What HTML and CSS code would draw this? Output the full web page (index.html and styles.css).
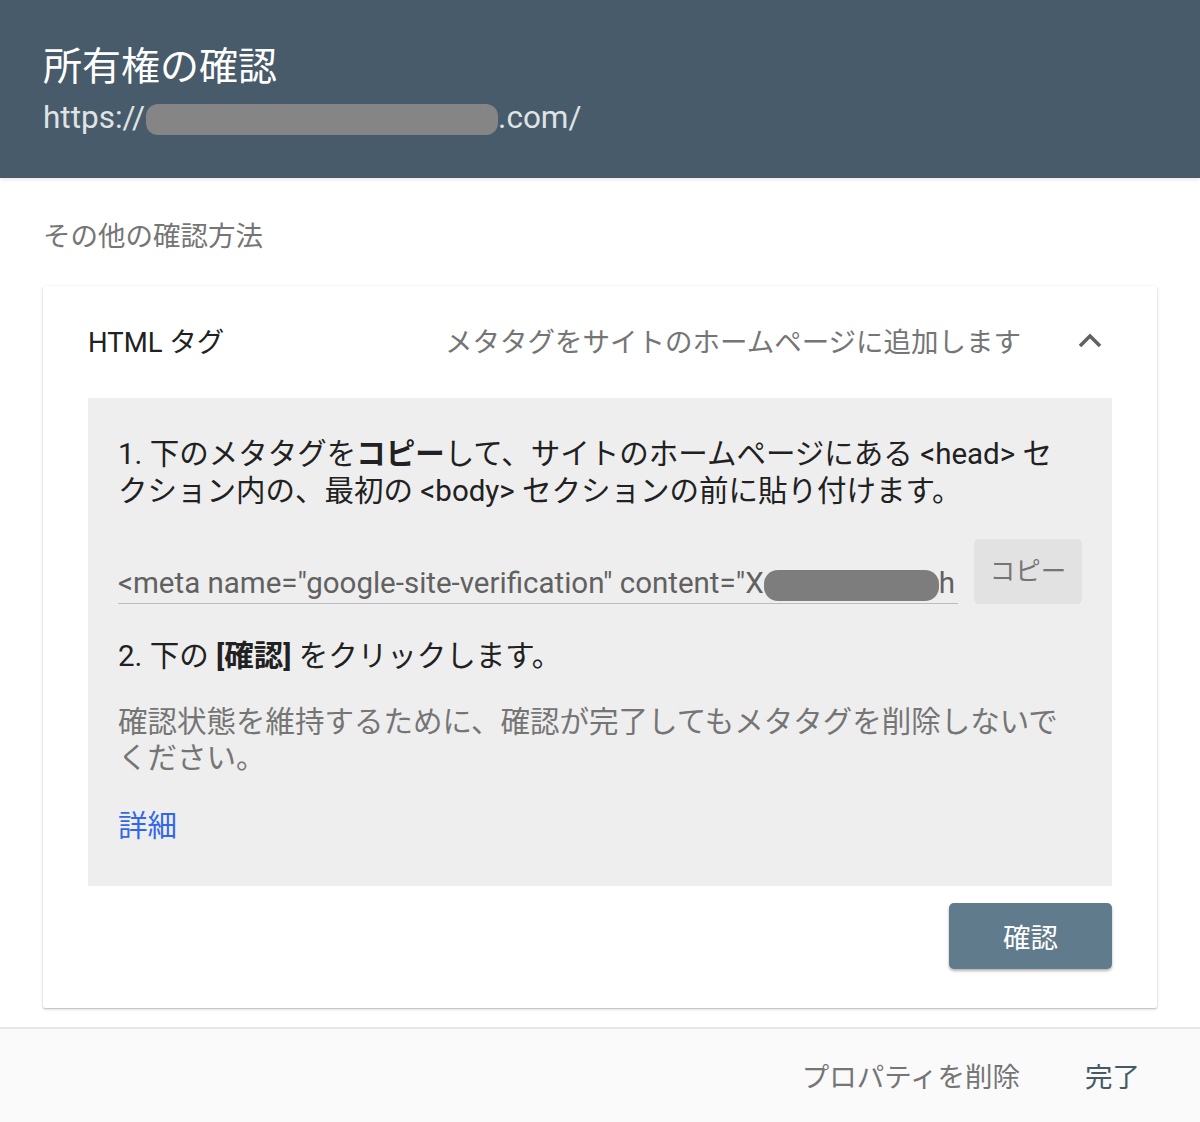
FILE: index.html
```html
<!doctype html>
<html lang="ja">
<head>
  <meta charset="utf-8">
  <title>所有権の確認</title>
  <link rel="stylesheet" href="styles.css">
</head>
<body>
  <div class="page">
    <header class="top">
      <h1 class="top-title">所有権の確認</h1>
      <div class="top-url">https://<span class="redact url-redact"></span>.com/</div>
    </header>

    <main class="content">
      <h2 class="other">その他の確認方法</h2>

      <section class="card">
        <div class="card-head">
          <div class="method">HTML タグ</div>
          <div class="method-desc">メタタグをサイトのホームページに追加します</div>
          <div class="chevron">
            <svg width="26" height="16" viewBox="0 0 26 16">
              <polyline points="3,13 13,3 23,13" fill="none" stroke="#616161" stroke-width="3.5"/>
            </svg>
          </div>
        </div>

        <div class="panel">
          <p class="step step1">1. 下のメタタグを<b>コピー</b>して、サイトのホームページにある &lt;head&gt; セクション内の、最初の &lt;body&gt; セクションの前に貼り付けます。</p>

          <div class="copy-row">
            <div class="field">&lt;meta name="google-site-verification" content="X<span class="redact meta-redact"></span>h</div>
            <button class="copy-btn" type="button">コピー</button>
          </div>

          <p class="step step2">2. 下の <b>[確認]</b> をクリックします。</p>

          <p class="note">確認状態を維持するために、確認が完了してもメタタグを削除しないでください。</p>

          <a class="more" href="#">詳細</a>
        </div>

        <div class="actions">
          <button class="verify-btn" type="button">確認</button>
        </div>
      </section>
    </main>

    <footer class="bottom">
      <button class="text-btn" type="button">プロパティを削除</button>
      <button class="text-btn done" type="button">完了</button>
    </footer>
  </div>
</body>
</html>
```

FILE: styles.css
```css
body {
  margin: 0;
  background: #ffffff;
  font-family: Roboto, "Noto Sans CJK JP", sans-serif;
  color: #212121;
}

.page {
  width: 1200px;
  height: 1122px;
  display: flex;
  flex-direction: column;
  overflow: hidden;
}

/* header */
.top {
  height: 178px;
  box-sizing: border-box;
  padding: 44px 43px 0;
  background: #485b6a;
  color: #ffffff;
  box-shadow: 0 2px 3px rgba(0, 0, 0, 0.08);
  position: relative;
  z-index: 1;
}
.top-title {
  margin: 0;
  font-size: 39px;
  font-weight: 400;
  line-height: 46px;
}
.top-url {
  margin-top: 9px;
  font-size: 31.5px;
  line-height: 38px;
  color: #dfe3e6;
}
.redact {
  display: inline-block;
  background: #858585;
  vertical-align: middle;
}
.url-redact {
  width: 352px;
  height: 31px;
  border-radius: 12px;
  margin-left: 1px;
}

/* content */
.content {
  flex: 1;
  padding: 0 43px;
  overflow: hidden;
}
.other {
  margin: 40px 0 0;
  font-size: 27.5px;
  font-weight: 400;
  line-height: 37px;
  color: #757575;
}

.card {
  margin-top: 31px;
  padding: 0 45px 39px;
  background: #ffffff;
  border-radius: 2px;
  box-shadow: 0 1px 3px rgba(0, 0, 0, 0.22), 0 1px 1px rgba(0, 0, 0, 0.1);
}
.card-head {
  height: 112px;
  box-sizing: border-box;
  padding-bottom: 5px;
  display: flex;
  align-items: center;
  font-size: 27.5px;
}
.method {
  flex: 0 0 357px;
  color: #212121;
}
.method-desc {
  flex: 1;
  color: #757575;
}
.chevron {
  width: 44px;
  display: flex;
  justify-content: center;
  padding-top: 2px;
}

.panel {
  background: #eeeeee;
  padding: 38px 30px 41px;
}
.step {
  margin: 0;
  font-size: 29.5px;
  line-height: 37px;
  color: #212121;
}
.step1 {
  padding-right: 10px;
}
.step b {
  font-weight: 700;
}
.copy-row {
  display: flex;
  align-items: flex-end;
  gap: 16px;
  margin-top: 29px;
}
.field {
  flex: 1;
  min-width: 0;
  white-space: nowrap;
  overflow: hidden;
  font-size: 29.5px;
  line-height: 40px;
  color: #616161;
  border-bottom: 1px solid #bdbdbd;
}
.meta-redact {
  width: 175px;
  height: 31px;
  border-radius: 14px;
  background: #7d7d7d;
}
.copy-btn {
  width: 108px;
  height: 65px;
  border: 0;
  border-radius: 5px;
  background: #e2e2e2;
  font: inherit;
  font-size: 25.5px;
  color: #757575;
  padding: 0 0 6px;
}
.step2 {
  margin-top: 34px;
}
.note {
  margin: 29px 0 0;
  font-size: 29.5px;
  line-height: 36px;
  color: #757575;
}
.more {
  display: block;
  margin-top: 32px;
  font-size: 29.5px;
  line-height: 37px;
  color: #3367e8;
  text-decoration: none;
}

.actions {
  display: flex;
  justify-content: flex-end;
  margin-top: 17px;
}
.verify-btn {
  width: 163px;
  height: 66px;
  border: 0;
  border-radius: 5px;
  background: #607b8b;
  color: #ffffff;
  font: inherit;
  font-size: 27.5px;
  box-shadow: 0 2px 3px rgba(0, 0, 0, 0.3);
}

/* footer */
.bottom {
  height: 95px;
  flex: 0 0 95px;
  box-sizing: border-box;
  border-top: 2px solid #e6e6e6;
  background: #fafafa;
  display: flex;
  justify-content: flex-end;
  align-items: center;
  gap: 65px;
  padding-right: 60px;
}
.text-btn {
  border: 0;
  background: none;
  padding: 0 0 2px;
  font: inherit;
  font-size: 27.5px;
  color: #757575;
}
.text-btn.done {
  color: #455a64;
}
```
